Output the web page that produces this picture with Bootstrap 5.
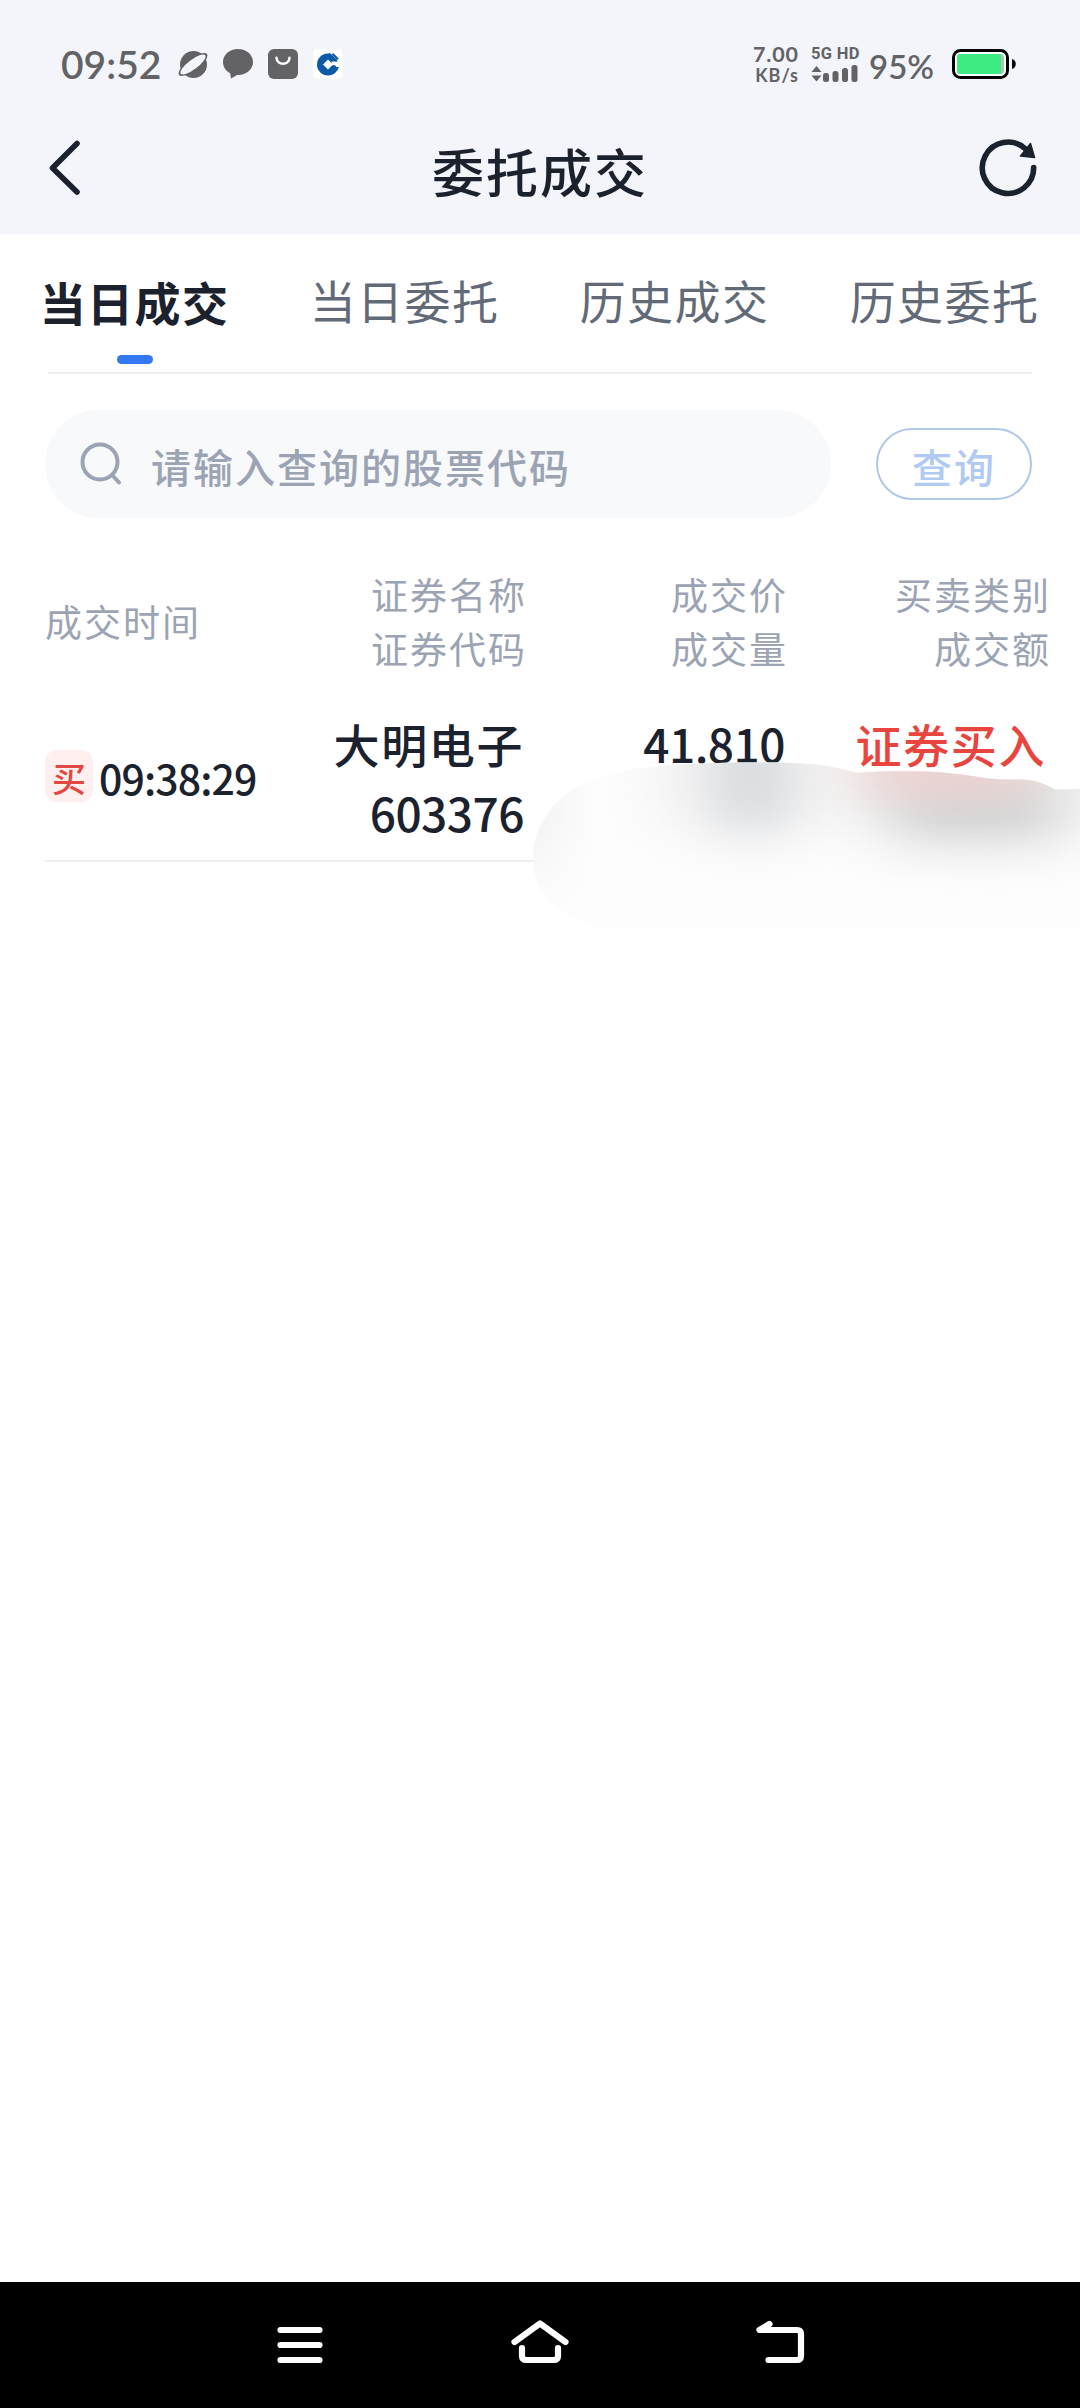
<!DOCTYPE html>
<html lang="zh-CN">
<head>
<meta charset="utf-8">
<meta name="viewport" content="width=device-width, initial-scale=1">
<title>委托成交</title>
<link href="https://cdn.jsdelivr.net/npm/bootstrap@5.3.0/dist/css/bootstrap.min.css" rel="stylesheet">
<style>
  body { font-family: "Noto Sans CJK SC", sans-serif; background: #fff; color: #1b222d; line-height: 1; }
  .screen { width: 1080px; height: 2408px; overflow: hidden; }
  svg { display: block; flex: none; }
  .topbar { background: #f4f5fa; height: 234px; }
  .status { height: 128px; padding: 0 62px 0 61px; color: #636366; font-family: Lato, sans-serif; }
  .clock { font-size: 39px; font-weight: 600; width: 117px; line-height: 126px; }
  .status-icons { gap: 15px; }
  .speed { width: 50px; font-weight: 700; text-align: right; }
  .speed-num { font-size: 21.500px; line-height: 18px; letter-spacing: .9px; }
  .speed-unit { font-size: 18px; line-height: 18px; letter-spacing: 1px; margin-top: 3px; }
  .net { width: 50px; font: 700 16.500px/16px Roboto, sans-serif; letter-spacing: .3px; margin-left: 12px; }
  .net svg { margin-top: 3px; }
  .percent { font-size: 33px; font-weight: 600; width: 91px; padding-left: 8px; line-height: 34px; padding-top: 3px; }
  .titlebar { height: 106px; }
  .title-text { font-size: 52px; letter-spacing: 2px; font-weight: 500; line-height: 85px; }
  .side { width: 120px; }
  .tabs { height: 138px; }
  .tab { width: 270px; font-size: 46px; letter-spacing: 1.400px; color: #636a77; line-height: 131px; height: 138px; padding-right: 1px; }
  .tab-on { color: #1b222d; font-weight: 700; line-height: 135px; }
  .tab-on::after { content: ""; position: absolute; left: 117px; top: 121px; width: 36px; height: 9px; border-radius: 5px; background: #3478f3; }
  .rule { height: 2px; background: #eee; margin: 0 48px; }
  .search-area { padding: 36px 48px 0 45px; }
  .search-box { width: 786px; height: 108px; background: #f7f9fb; padding-left: 34px; color: #9ca4b3; font-size: 40px; letter-spacing: 2px; font-weight: 500; }
  .search-box span { padding-top: 4px; }
  .query { width: 156px; height: 72px; border: 2px solid #b0c8e8; border-radius: 36px; color: #b1caf4; font-size: 40px; font-weight: 500; letter-spacing: 2px; line-height: 66px; background: none; padding: 3px 0 0 0; }
  .list { padding-left: 45px; }
  .c1 { width: 232px; } .c2 { width: 250px; } .c3 { width: 261px; } .c4 { width: 263px; }
  .list-head { padding-top: 49px; font-size: 37px; letter-spacing: 2px; line-height: 54px; color: #9ca4b3; }
  .list-row { height: 185px; font-size: 46px; font-weight: 500; letter-spacing: 1.600px; padding-top: 34px; line-height: 69px; }
  .list-row .c1 { padding-top: 41px; }
  .list-row .c2, .list-row .c3 { padding-right: 3px; }
  .list-row .c4 { padding-right: 5px; }
  .num { letter-spacing: -.500px; }
  .side-tag { width: 48px; height: 52px; border-radius: 12px; background: #ffefef; color: #e24741; font-size: 34px; letter-spacing: 0; line-height: 55px; text-align: center; }
  .time { font-size: 41px; letter-spacing: -.9px; margin-left: 6px; line-height: 55px; }
  .buy { color: #e8453f; }
  .smudge { position: absolute; left: 520px; top: 750px; }
  .sysnav { height: 126px; background: #000; flex: none; }
</style>
<script src="https://cdn.jsdelivr.net/npm/bootstrap@5.3.0/dist/js/bootstrap.bundle.min.js"></script>
</head>
<body>
<div class="screen position-relative d-flex flex-column">
  <header class="topbar">
    <div class="status d-flex align-items-center">
      <div class="clock">09:52</div>
      <div class="status-icons d-flex">
        <svg width="30" height="30" viewBox="0 0 30 30"><circle cx="15.500" cy="15.500" r="13.500" fill="#636366"/><g transform="rotate(-37 15 15.500)"><ellipse cx="15" cy="15.500" rx="17.500" ry="6" fill="#636366"/><ellipse cx="15" cy="15.500" rx="15.300" ry="4.800" fill="#f4f5fa"/></g></svg>
        <svg width="30" height="30" viewBox="0 0 30 30"><path d="M15 0C6.500 0 0 5.700 0 13c0 5 2.800 9 7.200 11.300L8 29.500l6-3.500h1c8.500 0 15-5.700 15-13S23.500 0 15 0Z" fill="#636366"/></svg>
        <svg width="30" height="30" viewBox="0 0 30 30"><rect width="30" height="30" rx="6" fill="#636366"/><path d="M8.500 8.800c.5 8 12.500 8 13 0" fill="none" stroke="#fff" stroke-width="2.500" stroke-linecap="round"/></svg>
        <svg width="30" height="30" viewBox="0 0 30 30"><rect width="30" height="30" rx="5" fill="#fff"/><circle cx="15" cy="15.500" r="11" fill="#0b5aa5"/><path d="m15 10.500 5 5-5 5-5-5ZM18.500 12.500H28v5.500h-4.500l-1.500-1.700h-3ZM15.500 3l9.500 9.500h4V3Z" fill="#fff"/><path d="m16 4.500 7.500 7.500M19.500 4.700l5.500 5.500" stroke="#0b5aa5" stroke-width="2"/></svg>
      </div>
      <div class="speed ms-auto"><div class="speed-num">7.00</div><div class="speed-unit">KB/s</div></div>
      <div class="net"><div>5G HD</div>
        <svg width="47" height="17" viewBox="0 0 47 17" fill="#636366"><path d="M.5 7 5.500 1l5 6ZM.5 10.500h10l-5 6Z"/><rect x="12" y="8" width="6" height="9" rx="2.500"/><rect x="21.500" y="6" width="6" height="11" rx="2.500"/><rect x="31" y="3" width="6" height="14" rx="2.500"/><rect x="40.500" y="0" width="6" height="17" rx="2.500"/></svg>
      </div>
      <div class="percent">95%</div>
      <svg width="66" height="30" viewBox="0 0 66 30"><rect x="1.500" y="1.500" width="54" height="27" rx="7" fill="#fff" stroke="#000" stroke-width="3"/><rect x="5" y="5" width="47" height="20" rx="3.500" fill="#a6c8b0"/><path d="M8.500 5H49v20H8.500A3.500 3.500 0 0 1 5 21.500v-13A3.500 3.500 0 0 1 8.500 5Z" fill="#3ceb82"/><path d="M60 10c5 1 5 9 0 10Z"/></svg>
    </div>
    <div class="titlebar d-flex justify-content-between align-items-start">
      <div class="side"><svg width="120" height="80" viewBox="0 128 120 80"><path d="M77 143.500 52.500 168 77 192" fill="none" stroke="#1b222d" stroke-width="5.600" stroke-linecap="round" stroke-linejoin="round"/></svg></div>
      <div class="title-text">委托成交</div>
      <div class="side"><svg width="120" height="80" viewBox="960 128 120 80"><path d="M1033.700 167.500A25.700 25.700 0 1 1 1025 148.500" fill="none" stroke="#1b222d" stroke-width="5.600" stroke-linecap="round"/><path d="m1030.500 143.500 4 14-14-1.500Z" fill="#1b222d" stroke="#1b222d" stroke-width="1.500" stroke-linejoin="round"/></svg></div>
    </div>
  </header>

  <nav class="tabs d-flex text-center">
    <div class="tab tab-on position-relative">当日成交</div>
    <div class="tab">当日委托</div>
    <div class="tab">历史成交</div>
    <div class="tab">历史委托</div>
  </nav>
  <div class="rule"></div>

  <div class="search-area d-flex align-items-center justify-content-between">
    <div class="search-box rounded-pill d-flex align-items-center">
      <svg width="72" height="46" viewBox="0 0 72 46"><g fill="none" stroke="#9ca4b3" stroke-width="4" stroke-linecap="round"><circle cx="21" cy="21" r="17.500"/><path d="m34 35 6 6.500"/></g></svg>
      <span>请输入查询的股票代码</span>
    </div>
    <button class="query" type="button">查询</button>
  </div>

  <main class="list flex-grow-1">
    <div class="list-head d-flex align-items-center">
      <div class="c1">成交时间</div>
      <div class="c2 text-end">证券名称<br>证券代码</div>
      <div class="c3 text-end">成交价<br>成交量</div>
      <div class="c4 text-end">买卖类别<br>成交额</div>
    </div>
    <div class="list-row d-flex">
      <div class="c1 d-flex"><span class="side-tag">买</span><span class="time">09:38:29</span></div>
      <div class="c2 text-end"><div>大明电子</div><div class="num">603376</div></div>
      <div class="c3 text-end"><div class="num">41.810</div></div>
      <div class="c4 text-end buy">证券买入</div>
    </div>
    <div class="rule ms-0"></div>
  </main>

  <svg class="smudge" width="560" height="220" viewBox="520 750 560 220">
    <defs>
      <clipPath id="edge"><path d="M533 857C534 824 556 794 588 782C598 775 622 770 645 767.500C680 763.500 720 762 770 762.500C800 763 816 764 827 766C840 768 848 771 857.500 772.700C885 771 915 771 937 772C965 774 985 779 1002 779.500C1016 780 1022 778.500 1032 780.500C1042 782.500 1050 787 1056 789.500L1080 789V970H800C740 944 650 936 600 928C556 915 533 893 533 857Z"/></clipPath>
      <filter id="b1" x="-150%" y="-150%" width="400%" height="400%"><feGaussianBlur stdDeviation="28 32"/></filter>
      <filter id="b2" x="-60%" y="-150%" width="220%" height="400%"><feGaussianBlur stdDeviation="30 16"/></filter>
      <filter id="b3" x="-60%" y="-150%" width="220%" height="400%"><feGaussianBlur stdDeviation="32 28"/></filter>
      <linearGradient id="side" x1="533" x2="595" y1="0" y2="0" gradientUnits="userSpaceOnUse"><stop stop-color="#f3f3f3"/><stop offset="1" stop-color="#fdfdfd"/></linearGradient>
      <linearGradient id="fade" x1="0" x2="0" y1="820" y2="950" gradientUnits="userSpaceOnUse"><stop stop-color="#fefefe" stop-opacity="0"/><stop offset=".7" stop-color="#fdfdfd"/><stop offset="1" stop-color="#fff"/></linearGradient>
    </defs>
    <g clip-path="url(#edge)">
      <rect x="520" y="750" width="560" height="220" fill="url(#side)"/>
      <rect x="650" y="720" width="450" height="110" fill="#f3f3f3" filter="url(#b1)"/>
      <rect x="712" y="725" width="78" height="106" fill="#d5d8dc" filter="url(#b1)"/>
      <rect x="890" y="770" width="170" height="84" fill="#cecfcf" fill-opacity=".9" filter="url(#b3)"/>
      <rect x="862" y="740" width="170" height="60" fill="#edcccc" fill-opacity=".75" filter="url(#b2)"/>
      <rect x="520" y="820" width="560" height="150" fill="url(#fade)"/>
    </g>
  </svg>

  <footer class="sysnav">
    <svg width="1080" height="126" viewBox="0 2282 1080 126" fill="none" stroke="#fff" stroke-width="6.200" stroke-linecap="round" stroke-linejoin="round"><path d="M280.500 2330h39M280.500 2345h39M280.500 2360h39M514.500 2342 540 2323.500 565.500 2342M522 2348V2356q0 4 4.500 4h27q4.500 0 4.500-4V2348M769.500 2324 759.500 2330H797q4 0 4 4V2356q0 4-4 4H768.500"/></svg>
  </footer>
</div>
</body>
</html>
